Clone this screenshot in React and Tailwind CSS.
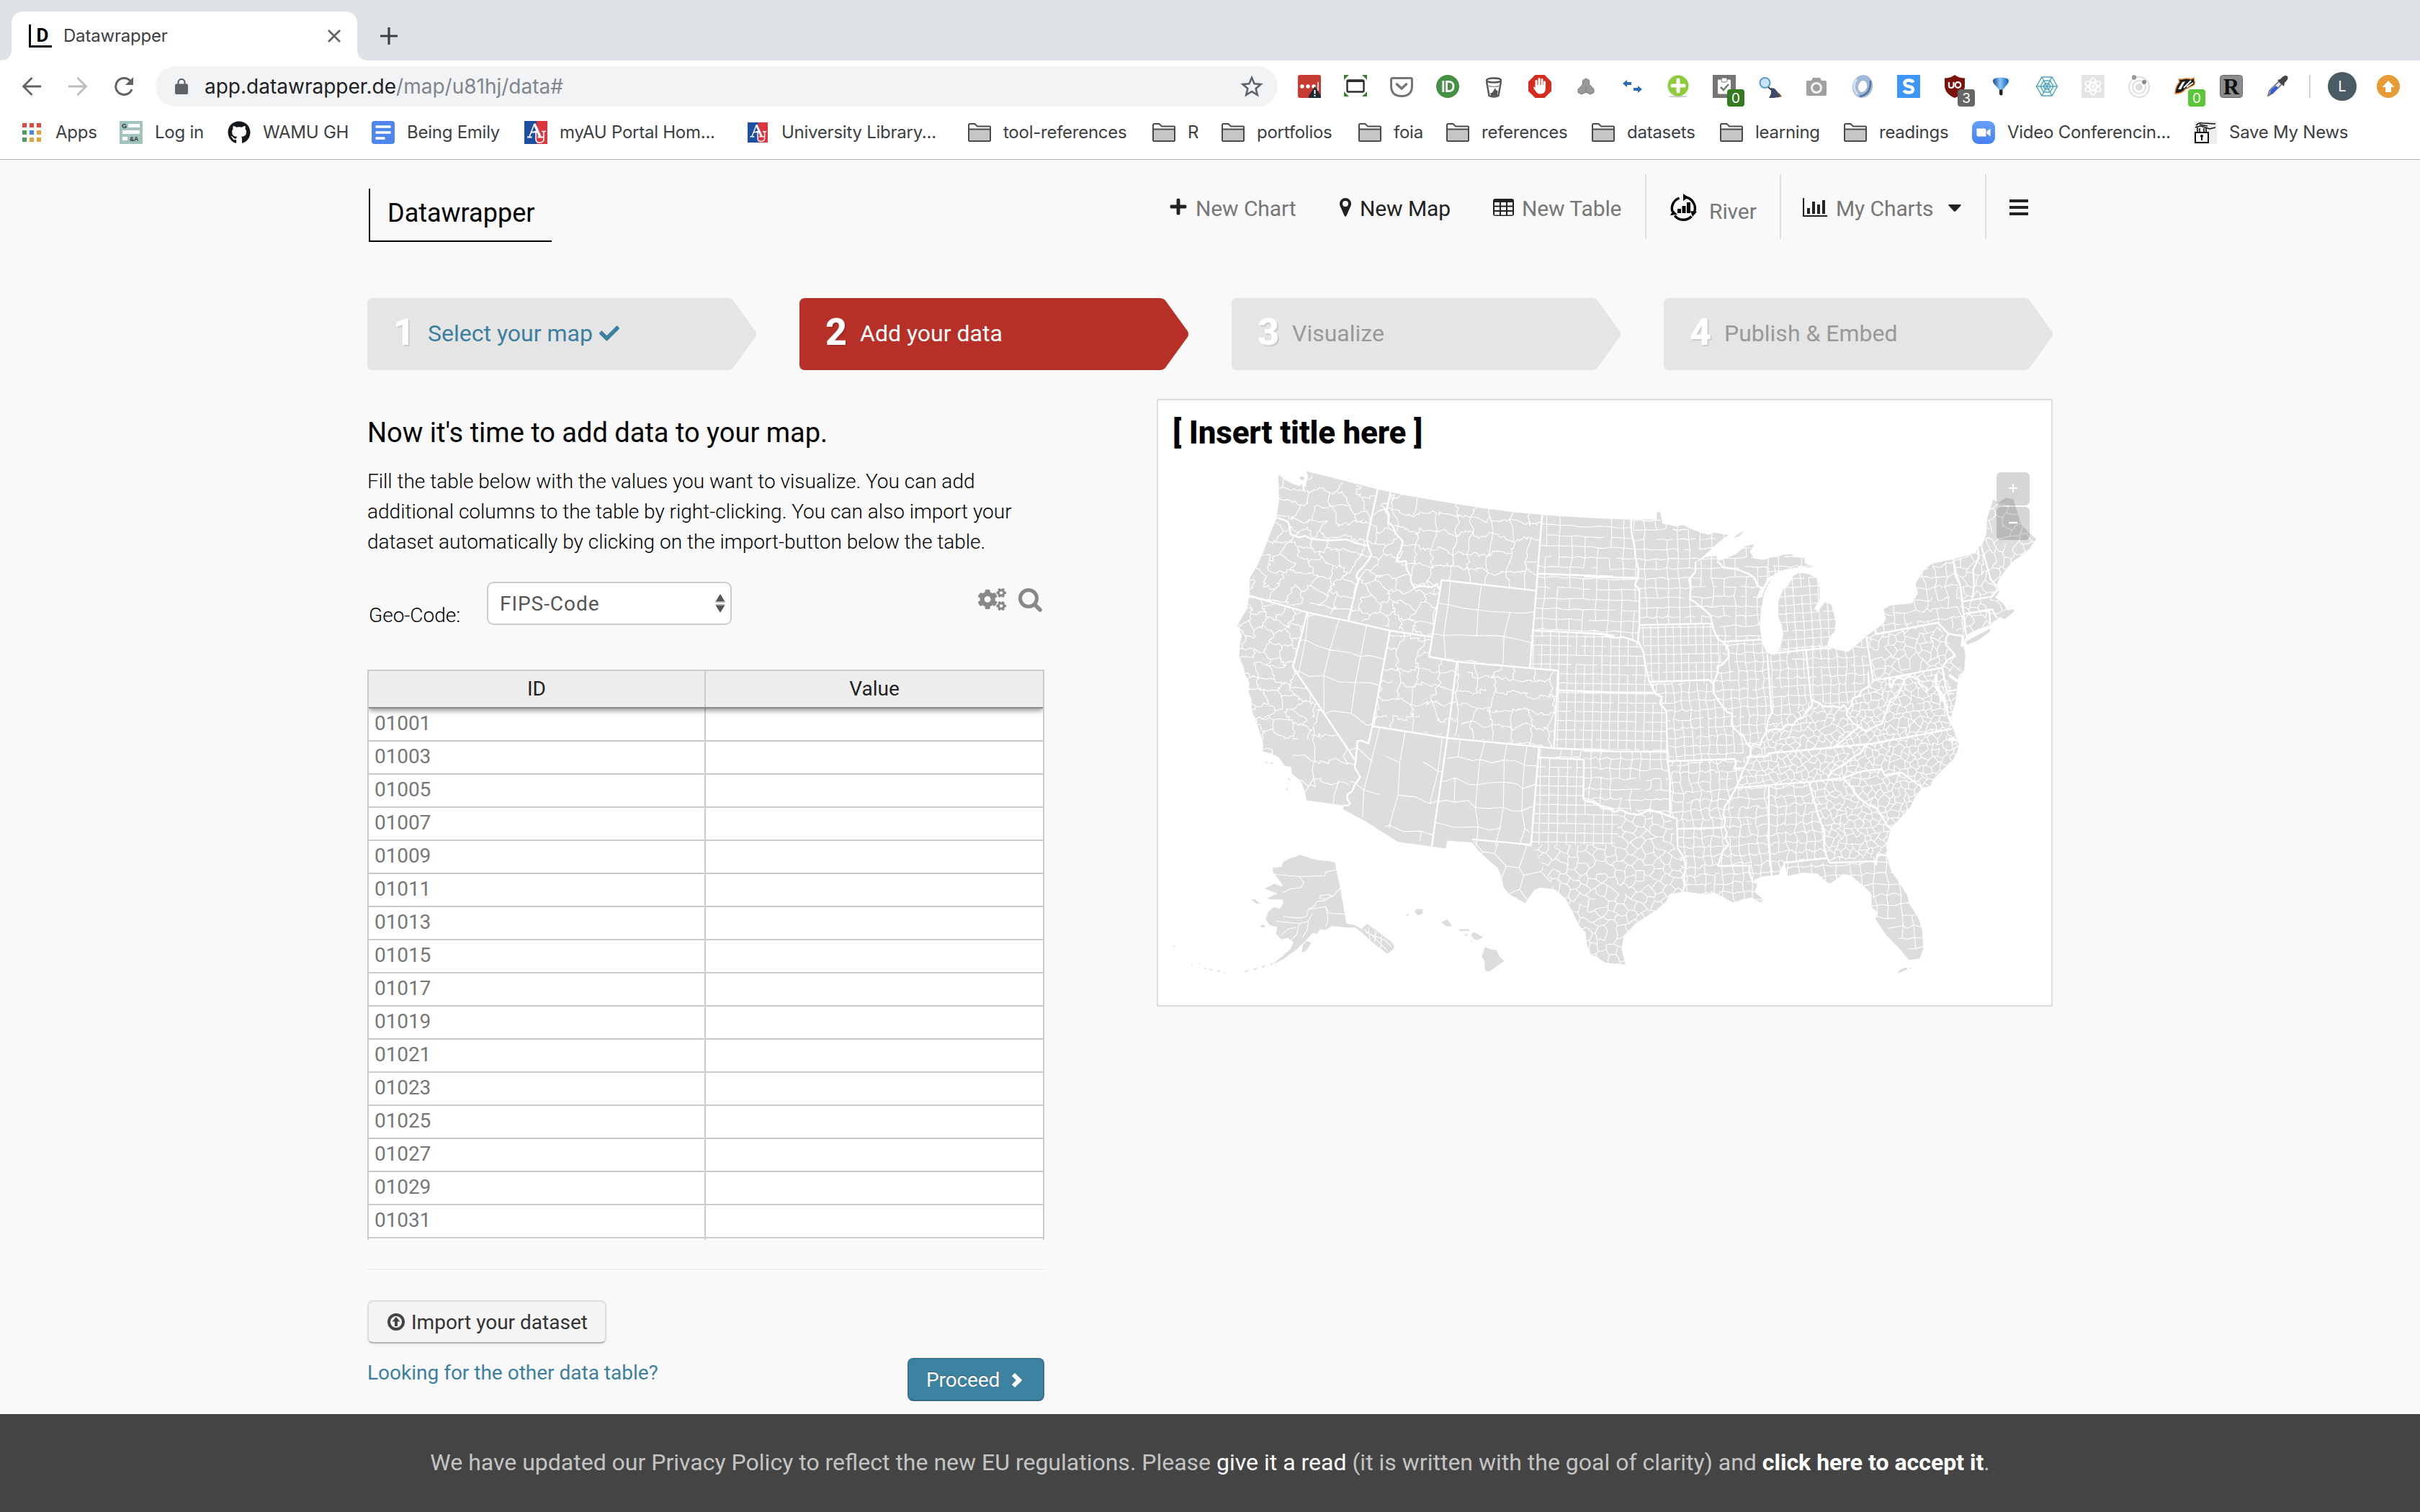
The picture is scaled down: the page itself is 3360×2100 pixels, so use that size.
import React from "react";
import { FaPlus, FaCheck, FaCogs, FaGithub } from "react-icons/fa";

/* ---------- map geometry ---------- */

const parse = (s) => s.trim().split(/\s+/).map((p) => p.split(",").map(Number));
// western and eastern map sheets use their own units
const W = (s) => parse(s).map(([x, y]) => [1600 + x * 0.40816, 550 + y * 0.54847]);
const E = (s) => parse(s).map(([x, y]) => [2200 + x * 0.42092, 550 + y * 0.54847]);
const line = (pts) => "M" + pts.map(([x, y]) => x.toFixed(1) + " " + y.toFixed(1)).join("L");
const area = (pts) => line(pts) + "Z";

const LAND = area([
  ...W("428,203 434,201 450,212 475,222 500,228 508,222 514,240 520,245 524,215 530,205 524,191 607,206 690,222 766,236 810,243 866,252 975,266 1040,274 1145,286 1240,295 1326,301 1400,305 1500,309"),
  ...E("80,311 153,313 238,313 239,294 250,294 258,323 300,330 325,327 350,336 385,347 412,352 425,346 475,352 440,372 400,400 366,422 400,408 435,405 440,418 470,410 500,400 530,380 560,375 545,395 560,412 590,415 620,408 660,402 684,400 690,408 725,410 728,425 752,430 750,434 710,432 690,436 668,438 640,445 620,455 603,460 590,485 578,492 566,515 585,508 598,482 618,460 592,500 583,540 578,580 586,625 600,650 625,656 645,640 656,605 650,580 637,555 640,520 655,490 672,480 690,455 705,448 735,450 768,462 776,490 775,515 757,540 770,545 795,520 815,530 828,570 826,595 808,610 800,635 830,642 868,648 900,628 935,605 980,580 995,565 985,540 1010,530 1080,525 1100,500 1092,475 1120,440 1145,425 1217,413 1290,398 1300,382 1310,380 1325,350 1328,310 1348,262 1365,270 1390,258 1415,262 1440,325 1465,345 1490,362 1470,385 1440,405 1410,420 1390,440 1370,460 1358,480 1368,495 1355,510 1380,525 1395,543 1415,540 1410,530 1418,545 1395,560 1385,565 1370,560 1340,580 1300,590 1260,605 1250,625 1256,660 1252,695 1232,715 1228,745 1225,770 1210,812 1200,808 1198,775 1190,790 1200,820 1215,842 1235,880 1230,900 1215,922 1190,940 1150,970 1140,988 1115,992 1090,1015 1075,1040 1040,1070 1010,1095 998,1130 997,1165 1010,1200 1040,1235 1065,1265 1070,1285 1100,1320 1113,1350 1118,1400 1105,1425 1070,1428 1040,1400 1020,1385 995,1365 960,1325 968,1308 948,1295 945,1260 920,1240 880,1215 855,1210 810,1235 790,1225 770,1210 720,1207 670,1215 662,1190 652,1190 640,1213 590,1216 560,1225 570,1240 560,1255 590,1275 580,1283 550,1270 520,1275 490,1283 460,1270 430,1258 400,1262 330,1255 280,1262 270,1280 240,1300 170,1335 130,1365 122,1400 135,1440 100,1437"),
  ...W("1568,1437 1540,1435 1510,1420 1493,1415 1478,1390 1473,1358 1455,1345 1428,1305 1410,1278 1390,1262 1370,1250 1320,1245 1300,1250 1283,1268 1268,1284 1240,1272 1215,1262 1195,1245 1186,1215 1175,1195 1150,1180 1108,1150 1088,1131 1003,1126 998,1146 950,1141 875,1133 835,1129 725,1077 648,1046 652,1037 524,1024 518,1000 505,975 475,957 472,940 450,936 430,915 405,905 374,900 378,880 360,840 338,795 338,770 328,750 330,725 315,705 312,690 295,660 298,630 304,605 290,580 305,560 322,540 330,500 332,460 360,425 380,390 400,350 422,310 430,270 430,235"),
]);

const ISLANDS = [
  E("1262,630 1258,622 1290,608 1340,588 1335,598 1300,618"),
  E("492,360 505,350 525,342 512,354"),
  E("1032,1462 1042,1452 1062,1447 1065,1452"),
  E("1070,1450 1082,1446 1078,1450"),
  E("1240,905 1251,901 1247,904"),
  W("498,208 508,203 518,207 512,214"),
  W("516,228 526,232 520,242"),
  W("382,926 392,926 390,930"), W("400,928 411,928 408,932"), W("460,965 471,972 466,974"), W("453,988 461,997 456,998"),
  W("862,1315 875,1310 868,1317"),
  W("891,1305 900,1299 920,1300 919,1311 903,1315"),
  W("983,1333 1003,1325 1020,1342 1000,1343"),
  W("1045,1350 1078,1350 1078,1354 1046,1355"),
  W("1059,1364 1070,1362 1072,1368"),
  W("1084,1364 1095,1358 1125,1370 1105,1378 1092,1374"),
  W("1080,1380 1088,1378 1086,1382"),
  W("1132,1395 1150,1401 1170,1403 1180,1418 1197,1431 1168,1446 1145,1458 1132,1455 1130,1430 1120,1420"),
  W("410,1195 440,1192 445,1180 470,1170 490,1166 498,1162 520,1166 560,1175 600,1178 621,1182 640,1250 660,1336 690,1340 712,1350 730,1337 760,1352 790,1370 810,1380 823,1392 818,1402 800,1412 778,1400 745,1382 715,1360 690,1346 660,1346 610,1342 590,1352 570,1350 560,1362 545,1360 530,1372 515,1385 505,1390 490,1402 470,1412 448,1425 430,1432 410,1438 440,1420 470,1400 480,1383 460,1372 440,1376 420,1362 425,1345 400,1340 385,1325 395,1305 412,1295 435,1298 445,1285 443,1275 400,1275 390,1272 425,1260 400,1253 382,1247 415,1235 440,1242 444,1240 428,1222 410,1205"),
  W("508,1408 512,1390 525,1380 540,1385 530,1398 516,1408"),
  W("335,1275 350,1275 365,1285 355,1286"), W("366,1342 378,1338 385,1343 375,1347"),
  W("400,1438 410,1435 404,1442"), W("370,1446 385,1440 378,1448"), W("340,1452 360,1446 350,1453"), W("310,1458 330,1451 322,1458"),
  W("176,1447 186,1451 180,1452"), W("190,1451 205,1452 200,1455"), W("215,1454 232,1455 226,1458"), W("240,1459 250,1460 246,1462"),
  W("70,1390 78,1394 75,1396"), W("132,1437 138,1442 136,1443"), W("155,1435 161,1437 158,1440"),
].map(area).join("");

const ALASKA_LINES = [
  W("415,1211 500,1217 585,1215 590,1205 625,1200"),
  W("500,1217 515,1232 505,1245 470,1248 442,1258"),
  W("640,1246 620,1262 590,1275 568,1272 572,1265 600,1262 615,1268"),
  W("445,1318 500,1322 525,1318 530,1300 550,1292 560,1280 590,1278"),
  W("530,1300 590,1293 600,1310 655,1312"),
  W("420,1330 500,1336 530,1330 545,1310"),
  W("500,1336 490,1365 470,1378"), W("530,1330 528,1350 510,1372"), W("590,1293 598,1325 590,1345"),
  W("440,1365 460,1350 490,1345"),
  W("720,1350 760,1375 800,1405"), W("735,1345 740,1380"), W("760,1355 755,1385"), W("780,1368 775,1398"), W("725,1358 790,1378 815,1395"),
].map(line).join("");

const BORDERS = [
  W("766,236 730,362 734,380 745,402 738,412 715,435 700,445 693,458 702,466 695,480 667,570"),
  W("810,243 797,290 805,300 803,320 818,330 830,350 852,368 845,390 833,405 835,420 862,418 866,440 878,455 880,470 890,485 915,481 950,484 968,476 974,488"),
  W("425,308 440,312 460,318 466,330 470,350 500,358 520,354 540,362 600,366 660,363 690,372 730,379"),
  W("328,505 527,548 667,570 808,594 950,610"),
  W("527,548 478,686 692,924 688,940 707,965 688,985 680,1000 663,1010 663,1020 672,1032 665,1037 650,1037"),
  W("808,594 748,836 735,880 712,873 697,874 696,890 692,924"),
  W("748,836 1003,866 1366,892 1568,899"),
  W("984,466 941,660 1036,673 1284,689 1380,695 1380,745 1568,750"),
  W("984,466 1306,493"),
  W("1326,301 1310,450 1306,493 1284,689"),
  W("1310,450 1568,457"),
  W("1298,594 1470,600 1530,602 1568,607"),
  W("1036,673 1003,866 950,1141"),
  W("1380,695 1366,892"),
  W("1315,892 1288,1136 1090,1123"),
  W("1312,915 1468,921 1466,1020 1480,1028 1500,1025 1520,1036 1540,1040 1568,1045"),
  E("153,313 155,345 165,380 168,410 178,440 176,460 166,478 181,490 181,580 176,620 195,650 200,680 212,720 235,755 255,762 248,778 270,797 273,920 282,970 282,1065"),
  E("0,457 178,461"),
  E("0,601 60,603 85,611 110,612 125,610 160,618 176,625"),
  E("181,580 418,576"),
  E("0,750 228,751"),
  E("0,899 270,901"),
  E("215,724 410,719 425,728"),
  E("0,1024 20,1028 40,1032 60,1045 80,1045 100,1053 120,1048 150,1058 180,1060 210,1050 240,1053 260,1058 282,1065 305,1070 307,1145 325,1165 335,1190 328,1215 330,1240 322,1258"),
  E("307,1096 455,1093"),
  E("366,422 366,445 345,465 350,485 348,515 365,522 385,535 415,555 425,590 440,615 465,628 475,645 475,662 455,680 438,685 440,700 425,728 425,750 440,770 455,785 470,800 487,805 485,835 505,850 525,862 535,880 548,890 548,910 525,945 500,992 480,1020 462,1040 458,1060 465,1075 460,1090 470,1105 465,1120 475,1135 455,1155 440,1190 545,1189 543,1205 555,1230 575,1235"),
  E("273,925 495,919 500,930 492,944 522,942"),
  E("455,622 585,617"),
  E("440,420 460,435 500,438 540,450 560,460 570,480 585,487"),
  E("603,655 615,780 618,800 605,820 600,850 585,870 580,885 560,880 548,890"),
  E("622,652 800,637"),
  E("730,642 748,770"),
  E("600,848 630,843 650,845 665,832 690,832 700,820 720,815 735,795 750,785 752,770 775,778 790,787 820,785 845,790 855,782 868,795 880,785 885,765 905,760 915,745 938,735 936,700"),
  E("930,612 952,720 1010,713 1100,700 1180,688 1195,670 1222,657 1205,640 1192,630 1192,615 1200,602 1248,608"),
  E("958,590 962,603 1165,574 1200,602"),
  E("865,795 865,808 885,828 905,838 930,850 950,840 980,830 1000,790 1010,768 1030,760 1045,740 1055,718 1030,712 1008,738 1005,715"),
  E("1055,718 1072,708 1100,718 1105,730 1130,740 1128,750"),
  E("825,890 870,860 905,838"),
  E("535,915 605,912 605,905 720,897 950,880 1210,843"),
  E("500,992 740,977 855,967 880,960 915,950 980,945 990,960 1045,953 1115,992"),
  E("805,965 815,952 840,940 870,925 895,910 910,905 930,880"),
  E("855,970 880,990 900,1015 935,1035 965,1045 985,1070 1000,1090 1010,1095"),
  E("608,990 608,1140 618,1215"),
  E("740,977 770,1060 792,1105 790,1140 800,1170 810,1182 955,1178 962,1187 965,1162 997,1163"),
  E("660,1197 658,1182 800,1170"),
  E("1217,413 1222,445 1240,480 1250,550 1258,605"),
  E("1298,385 1300,410 1282,440 1285,480 1280,510"),
  E("1250,520 1345,508 1360,492"),
  E("1252,552 1345,540 1358,560"),
  E("1310,383 1340,465 1358,480"),
  E("1335,545 1338,575"),
  E("1180,688 1195,748 1228,744"),
].map(line).join("");

const BAYS = [
  E("1160,708 1160,738 1185,760 1192,790"),
  E("1165,738 1178,768"),
  E("1205,708 1230,722"),
  E("1205,868 1232,872"),
  E("1248,608 1246,632"),
].map(line).join("");

function rng(seed) {
  let s = seed;
  return () => {
    s = (s * 1664525 + 1013904223) % 4294967296;
    return s / 4294967296;
  };
}

// irregular brick (hex = zigzag) mesh of cell lines that covers a region
function mesh(pts, cw, ch, jit, angle, hex, skip, seed) {
  const r = rng(seed);
  const xs = pts.map((p) => p[0]);
  const ys = pts.map((p) => p[1]);
  const cx = (Math.min(...xs) + Math.max(...xs)) / 2;
  const cy = (Math.min(...ys) + Math.max(...ys)) / 2;
  const half = Math.hypot(Math.max(...xs) - cx, Math.max(...ys) - cy) + ch;
  const nx = Math.ceil((half * 4) / cw);
  const ny = Math.ceil((half * 2) / ch);
  const cos = Math.cos((angle * Math.PI) / 180);
  const sin = Math.sin((angle * Math.PI) / 180);
  const V = [];
  for (let j = 0; j <= ny; j++) {
    const row = [];
    for (let i = 0; i <= nx; i++) {
      const zig = hex ? ((i + j) % 2 ? -0.14 : 0.14) * ch : 0;
      const x = -half + (i * cw) / 2 + (r() - 0.5) * cw * jit;
      const y = -half + j * ch + zig + (r() - 0.5) * ch * jit;
      row.push([cx + x * cos - y * sin, cy + x * sin + y * cos]);
    }
    V.push(row);
  }
  const wobble = jit > 0.35 ? 0.22 * cw : 0;
  const edge = (a, b) => {
    if (!wobble) return line([a, b]);
    const mid = (t) => [a[0] + (b[0] - a[0]) * t + (r() - 0.5) * wobble, a[1] + (b[1] - a[1]) * t + (r() - 0.5) * wobble];
    return cw > 20 ? line([a, mid(0.25), mid(0.5), mid(0.75), b]) : line([a, mid(0.5), b]);
  };
  let d = "";
  for (let j = 0; j < ny; j++) {
    for (let i = 0; i < nx; i++) {
      if (r() > skip * 0.6) d += edge(V[j][i], V[j][i + 1]);
      const down = hex ? (i + j) % 2 === 0 : i % 2 === 0;
      if (down && r() > skip) d += edge(V[j][i], V[j + 1][i]);
    }
  }
  return d;
}

const REGIONS = [
  [W("400,180 810,243 797,290 850,368 862,420 890,485 974,488 950,610 320,505 300,450 420,250"), 25, 20, 0.6, 8, true, 0.14],
  [W("810,240 1326,298 1306,493 984,466 974,488 890,485 862,420 850,368 797,290"), 27, 24, 0.5, 5, false, 0.14],
  [W("984,466 1306,493 1284,689 941,660"), 42, 38, 0.2, 5, false, 0.15],
  [W("320,505 527,548 478,686 560,775 540,870 360,870 250,700 250,560"), 23, 17, 0.6, 15, true, 0.12],
  [W("560,775 692,924 650,1040 500,1030 360,920 360,870 540,870"), 46, 34, 0.36, 8, false, 0.1],
  [W("527,548 808,594 748,836 1003,866 950,1141 648,1046 692,924 478,686"), 42, 46, 0.34, 9, false, 0.15],
  [W("808,594 950,610 941,660 1380,695 1366,892 748,836"), 27, 22, 0.45, 5, false, 0.17],
  [W("1003,866 1315,892 1288,1136 950,1141"), 32, 31, 0.3, 5, false, 0.2],
  [[...W("1326,298 1500,305"), ...E("153,310 178,440 181,580 176,625 110,612"), ...W("1530,602 1298,594")], 18, 14.5, 0.16, 2, false, 0.18],
  [[...W("1284,594 1530,602"), ...E("110,612 176,625 255,765 270,797 273,899"), ...W("1366,892 1380,695 1284,689")], 12, 13, 0.06, 1, false, 0.07],
  [[...W("1315,892 1568,899"), ...E("273,899 282,1065 80,1045"), ...W("1466,1020 1468,921 1312,915")], 14, 14, 0.3, 1, false, 0.2],
  [[...W("1312,915 1468,921 1466,1020 1568,1045"), ...E("110,1053 110,1120"), ...W("1568,1136 1288,1136")], 12.6, 13, 0.04, 1, false, 0.04],
  [[...W("1290,1136 1568,1136"), ...E("110,1120 110,1053 282,1065 307,1145 335,1190 322,1262 125,1460"), ...W("1568,1450 1480,1430 1380,1265")], 15, 13.5, 0.5, 28, true, 0.06],
  [W("1090,1123 1290,1136 1380,1265 1270,1300 1160,1220"), 36, 34, 0.35, 25, true, 0.1],
  [E("153,290 780,340 780,435 620,455 585,617 455,622 418,576 181,580 178,440"), 15.5, 13.5, 0.22, -1, false, 0.18],
  [E("181,580 418,576 470,640 425,728 215,724"), 10.4, 12.4, 0.05, -1, false, 0.03],
  [E("600,430 850,440 850,640 600,660"), 11.5, 12, 0.08, -4, false, 0.05],
  [E("455,622 600,617 600,650 935,605 940,700 890,770 850,788 752,770 600,850 548,890 500,919 273,925 270,797 215,724 425,728"), 11.5, 12.5, 0.28, -3, false, 0.12],
  [E("273,925 535,915 500,992 740,977 792,1105 800,1172 660,1182 660,1300 322,1270 305,1070 282,1065"), 13, 13, 0.42, -3, false, 0.08],
  [E("548,890 600,850 752,770 865,795 950,718 1180,688 1260,820 1250,900 997,1165 805,1180 740,977 500,992"), 11, 9.6, 0.72, -6, true, 0.03],
  [E("660,1182 810,1182 997,1163 1150,1300 1130,1450 940,1300 900,1250 660,1240"), 17, 15.5, 0.34, -4, false, 0.12],
  [E("930,605 960,600 1165,574 1222,657 1260,720 1180,688 950,718"), 13.5, 12, 0.65, -20, true, 0.05],
  [E("960,603 960,500 1090,420 1217,405 1258,605 1165,574"), 15, 15, 0.38, -6, false, 0.15],
  [E("1217,405 1300,370 1348,240 1500,340 1500,600 1258,625"), 15, 14, 0.6, -12, true, 0.12],
];

function UsMap() {
  return (
    <svg viewBox="1608 650 1240 746" className="block h-[746px] w-[1240px]">
      <defs>
        <clipPath id="land"><path d={LAND} /></clipPath>
        {REGIONS.map((g, i) => (
          <clipPath id={"region" + i} key={i}><path d={area(g[0])} /></clipPath>
        ))}
      </defs>
      <path d={LAND} fill="#dddddd" />
      <g clipPath="url(#land)" fill="none" stroke="#fff">
        {REGIONS.map(([pts, cw, ch, jit, angle, hex, skip], i) => (
          <g key={i} clipPath={`url(#region${i})`}>
            <path d={mesh(pts, cw, ch, jit, angle, hex, skip, 77 + i * 31)} strokeWidth="1.15" />
          </g>
        ))}
        <path d={BORDERS} strokeWidth="2.4" strokeLinejoin="round" strokeLinecap="round" />
        <path d={BAYS} strokeWidth="4" strokeLinecap="round" />
      </g>
      <path d={ISLANDS} fill="#dddddd" />
      <path d={ALASKA_LINES} fill="none" stroke="#fff" strokeWidth="1.1" />
    </svg>
  );
}

/* ---------- browser icons ---------- */

const I = ({ children, vb = "0 0 32 32", className = "h-8 w-8" }) => (
  <svg viewBox={vb} className={className + " block shrink-0"} fill="none">{children}</svg>
);

const Folder = () => (
  <I>
    <path d="M1 27V5.500Q1 4 2.500 4H9.500L13 7.500H30Q31 7.500 31 8.500V27Q31 28 30 28H2Q1 28 1 27Z" fill="#fff" stroke="#4a4a4a" strokeWidth="2" />
    <path d="M2 11.500H30V27H2Z" fill="#c6c6c6" />
    <path d="M1 11.500H31" stroke="#4a4a4a" strokeWidth="2" />
  </I>
);

const AU = ({ className }) => (
  <I className={className}>
    <rect width="17" height="32" fill="#1f4fa0" />
    <rect x="17" width="15" height="32" fill="#dc3640" />
    <path d="M7 22L14 4" stroke="#fff" strokeWidth="1.600" />
    <path d="M14 4L22 22" stroke="#fff" strokeWidth="3.400" />
    <path d="M9.500 15.500H19M4 22.500H10.500M18.500 22.500H26" stroke="#fff" strokeWidth="1.800" />
    <path d="M16 15V25Q16 30 21 30Q27 30 27 25V15M13.500 14.500H18.500M24 14.500H30" stroke="#fff" strokeWidth="1.600" />
  </I>
);

const Apps = () => (
  <I>
    {["#e0483d", "#e0483d", "#e0483d", "#4b9e5a", "#4285f4", "#e2a33b", "#4b9e5a", "#e2a33b", "#e2a33b"].map((c, i) => (
      <rect key={i} x={3 + (i % 3) * 10} y={3 + Math.floor(i / 3) * 10} width="6" height="6" fill={c} />
    ))}
  </I>
);

const LogIn = () => (
  <I>
    <rect width="32" height="32" fill="#a2c4bf" />
    <rect x="12" y="4" width="16" height="5" fill="#fff" />
    <rect x="4" y="13" width="24" height="5" fill="#fff" />
    <rect x="4" y="22" width="7" height="5" fill="#fff" />
    <text x="3" y="10" fontSize="9" fontWeight="700" fill="#333" fontFamily="Liberation Sans, sans-serif">G</text>
    <text x="14" y="28" fontSize="8.500" fontWeight="700" fill="#333" fontFamily="Liberation Sans, sans-serif">&amp;A</text>
  </I>
);

const Docs = () => (
  <I>
    <rect width="32" height="32" rx="4" fill="#4f86ec" />
    <path d="M5.500 8H26.500M5.500 16H26.500M5.500 24H18.500" stroke="#fff" strokeWidth="3.600" />
  </I>
);

const Zoom = () => (
  <I>
    <defs><linearGradient id="zg" x2="0" y2="1"><stop stopColor="#66a0fa" /><stop offset="1" stopColor="#4780ee" /></linearGradient></defs>
    <rect width="32" height="32" rx="9" fill="url(#zg)" />
    <path d="M6.500 10.500H17Q19.500 10.500 19.500 13V21.500H9Q6.500 21.500 6.500 19ZM20.500 14.500L25.500 10.500V21.500L20.500 17.500Z" fill="#fff" />
  </I>
);

const SaveNews = () => (
  <I>
    <rect width="32" height="32" fill="#eeeeee" />
    <rect x="2" y="16" width="18" height="14" fill="#fff" stroke="#111" strokeWidth="2" />
    <path d="M5 16V9M8 16V10M14 16V10M17 16V10" stroke="#111" strokeWidth="1.600" />
    <path d="M3 6Q7 2 12 3L30 4M2 9Q8 6 13 8L22 11L30 9M8 5L19 7" stroke="#111" strokeWidth="1.600" />
    <circle cx="11" cy="21" r="2" fill="#111" /><path d="M11 21V27" stroke="#111" strokeWidth="2" />
  </I>
);

const BOOKMARKS = [
  ["Apps", <Apps />, "w-[138px]"],
  ["Log in", <LogIn />, "w-[150px]"],
  ["WAMU GH", <FaGithub className="h-8 w-8 shrink-0 text-[#15181c]" />, "w-[200px]"],
  ["Being Emily", <Docs />, "w-[212px]"],
  ["myAU Portal Hom...", <AU />, "w-[308px]"],
  ["University Library...", <div className="flex w-8 justify-center"><AU className="h-7 w-7" /></div>, "w-[308px]"],
  ["tool-references", <Folder />, "w-[256px]"],
  ["R", <Folder />, "w-[96px]"],
  ["portfolios", <Folder />, "w-[190px]"],
  ["foia", <Folder />, "w-[122px]"],
  ["references", <Folder />, "w-[202px]"],
  ["datasets", <Folder />, "w-[178px]"],
  ["learning", <Folder />, "w-[172px]"],
  ["readings", <Folder />, "w-[178px]"],
  ["Video Conferencin...", <Zoom />, "w-[308px]"],
  ["Save My News", <SaveNews />, "w-[230px]"],
];

const Badge = ({ className, children }) => (
  <span className={"absolute left-[20px] top-[20px] flex h-6 w-6 items-center justify-center rounded-[4px] text-[19px] leading-none text-white " + className}>{children}</span>
);

const EXTENSIONS = [
  <I><rect width="32" height="32" rx="3" fill="#c63c32" /><circle cx="6" cy="16" r="2.700" fill="#fff" /><circle cx="14" cy="16" r="2.700" fill="#fff" /><circle cx="22" cy="16" r="2.700" fill="#fff" /><path d="M28 10V22" stroke="#fff" strokeWidth="1.500" /><path d="M23.500 16L32 29V32H15V29Z" fill="#1f2a35" /><path d="M23.500 21V26.500M23.500 28V30" stroke="#fff" strokeWidth="2" /></I>,
  <I><path d="M0 0H7L0 7ZM32 0V7L25 0ZM0 30V23L7 30ZM32 30H25L32 23Z" fill="#3f7d35" /><rect x="4.500" y="7.500" width="23" height="16" rx="1.500" fill="#fff" stroke="#2d2d30" strokeWidth="2.400" /><path d="M4 7H28V10H4Z" fill="#2d2d30" /></I>,
  <I><path d="M3.500 4.500H28.500Q30.500 4.500 30.500 6.500V15Q30.500 29.500 16 29.500Q1.500 29.500 1.500 15V6.500Q1.500 4.500 3.500 4.500Z" stroke="#757575" strokeWidth="3" /><path d="M9.500 13L16 19L22.500 13" stroke="#757575" strokeWidth="3.600" strokeLinecap="round" strokeLinejoin="round" /></I>,
  <I><circle cx="16" cy="16" r="16" fill="#449044" /><path d="M9.800 8V24" stroke="#fff" strokeWidth="2.800" /><path d="M14.600 9.300H17Q24 9.300 24 16Q24 22.700 17 22.700H14.600Z" stroke="#fff" strokeWidth="2.800" /></I>,
  <I><ellipse cx="16" cy="7.500" rx="10" ry="3" stroke="#555" strokeWidth="2.400" /><path d="M6 9L9.500 29Q16 32 22.500 29L26 9" stroke="#555" strokeWidth="2.400" /><path d="M7.500 15Q16 18 24.500 15" stroke="#999" strokeWidth="1.500" /><path d="M11 25Q13 26 15 23L18 18L19 21L21.500 22L21 29H12Z" fill="#555" /></I>,
  <I><path d="M9.500 0H22.500L32 9.500V22.500L22.500 32H9.500L0 22.500V9.500Z" fill="#d32d20" /><path d="M11 17V8.500M15 16V5.500M19 16V6.500M22.500 18V10" stroke="#fff" strokeWidth="2.900" strokeLinecap="round" /><path d="M9.600 14H23.900V20Q23 26.500 16.500 26.500Q12 26.500 9 21L6.800 17.500Q8 16 10 18Z" fill="#fff" /></I>,
  <I><path d="M16 5L20.500 7.500V13L25 17.500L27 20V24.500L22 27L17 24.500H15L10 27L5 24.500V20L7.500 17.500L11.500 13V7.500Z" fill="#999" stroke="#777" strokeWidth="1" /><path d="M16 17V24" stroke="#777" strokeWidth="1" /></I>,
  <I><path d="M3 12L9 7V10H15V14H9V17ZM30 20L24 15V18H18V22H24V25Z" fill="#2a6fb5" /></I>,
  <I><ellipse cx="16" cy="30" rx="13" ry="1.500" fill="#ccc" /><circle cx="16" cy="15" r="14.500" fill="#8ccb3a" /><path d="M16 7V23M8 15H24" stroke="#fff" strokeWidth="5" strokeLinecap="round" /></I>,
  <><I><rect width="32" height="32" fill="#757575" /><rect x="7" y="6.500" width="18" height="20" rx="1.500" fill="#fff" /><rect x="12" y="4" width="8" height="6" rx="2" fill="#fff" stroke="#757575" /><path d="M11 17L15 21L22 13" stroke="#757575" strokeWidth="2.500" /></I><Badge className="bg-[#357a1f]">0</Badge></>,
  <I><circle cx="8.500" cy="11" r="7" fill="#c5e4fa" stroke="#5b9bc9" strokeWidth="2" /><path d="M13 17L20 23" stroke="#333" strokeWidth="2" /><path d="M17 18L22 19L27 25L30 28L28 31L20 32H14L17 26Z" fill="#3c4a68" /><path d="M28 25L32 30L28 31Z" fill="#8a4a2a" /></I>,
  <I><path d="M3 8H9L11 4H21L23 8H28Q30 8 30 10V27Q30 29 28 29H4Q2 29 2 27V10Q2 8 3 8Z" fill="#a0a0a0" /><circle cx="16" cy="18" r="6.500" fill="#a0a0a0" stroke="#f2f2f2" strokeWidth="3" /></I>,
  <I><ellipse cx="16" cy="16" rx="10" ry="12" stroke="#9fb8d8" strokeWidth="8" transform="rotate(15 16 16)" /><path d="M8 6Q0 16 9 27" stroke="#d5e1f0" strokeWidth="3" /><path d="M12 30Q28 27 27 8" stroke="#54769f" strokeWidth="2.500" /></I>,
  <I><rect width="32" height="32" fill="#3e97f5" /><path d="M22.500 10.500Q21 7.500 16 7.500Q10.500 7.500 10.500 11.500Q10.500 15 16 16Q22 17 22 20.500Q22 24.500 16 24.500Q11 24.500 9.500 21.500" stroke="#fff" strokeWidth="4.400" /></I>,
  <><I><path d="M16 0Q22 4.500 30 4.500V15Q30 26 16 32Q2 26 2 15V4.500Q10 4.500 16 0Z" fill="#7b120d" /><path d="M8 10V15Q8 18 11 18Q14.500 18 14.500 15V10" stroke="#fff" strokeWidth="2.200" /><circle cx="20.500" cy="14" r="3.800" stroke="#fff" strokeWidth="2.200" /></I><Badge className="bg-[#666]">3</Badge></>,
  <I><defs><linearGradient id="vg" x2="1"><stop stopColor="#12428f" /><stop offset=".45" stopColor="#8cc8f4" /><stop offset="1" stopColor="#0b5cc0" /></linearGradient></defs><path d="M7 5Q16 2 25 5Q29 8 25 13L18.500 21H14L7 13Q3 8 7 5Z" fill="url(#vg)" /><path d="M14 20.500H18.500V27Q16.500 30 14 27Z" fill="#222" /></I>,
  <I><path d="M9 3H23L30.500 16L23 29H9L1.500 16ZM11.500 8H20.500L25 16L20.500 24H11.500L7 16ZM13.500 12H18.500L21 16L18.500 20H13.500L11 16ZM9 3L23 29M23 3L9 29M1.500 16H30.500" stroke="#4fa9b8" strokeWidth="1.500" /></I>,
  <I><rect width="32" height="32" rx="2" fill="#e4e4e4" /><g stroke="#fff" strokeWidth="1.700"><ellipse cx="16" cy="16" rx="12" ry="4.700" transform="rotate(90 16 16)" /><ellipse cx="16" cy="16" rx="12" ry="4.700" transform="rotate(30 16 16)" /><ellipse cx="16" cy="16" rx="12" ry="4.700" transform="rotate(150 16 16)" /></g><circle cx="16" cy="16" r="2.400" fill="#fff" /></I>,
  <I><circle cx="16" cy="17" r="14" stroke="#ddd" strokeWidth="2" /><circle cx="16" cy="17" r="9" stroke="#ddd" strokeWidth="2" /><circle cx="16" cy="17" r="5" fill="#ddd" /><circle cx="9" cy="3.500" r="3.200" fill="#999" /><circle cx="23" cy="10" r="3" fill="#888" /></I>,
  <><I><path d="M2 24Q3 15 8 10L7 6L12 6Q18 4 24 6L28 4L29 9Q31 14 24 16L16 20Q12 26 2 26Z" fill="#1d1d1d" stroke="#e88f3a" strokeWidth="1.500" /><path d="M6 20L12 10L16 9L10 20Z" fill="#fff" /><path d="M14 18L20 12L24 8M18 17L27 11" stroke="#fff" strokeWidth="1.800" /></I><Badge className="bg-[#5cc639]">0</Badge></>,
  <I><rect x="0.500" y="0.500" width="31" height="31" rx="4" fill="#8c8c8c" stroke="#666" /><text x="16" y="26.500" textAnchor="middle" fontSize="31" fontWeight="700" fill="#111" fontFamily="Liberation Serif, serif">R</text></I>,
  <I><path d="M3 29L5 22L18 9L22 13L9 26Z" fill="#dfe6f5" stroke="#666" strokeWidth="1.500" /><path d="M5 27L7 21L14 15L17 18L9 26Z" fill="#2f5be0" /><path d="M16 7L20 6Q26 -1 30 2Q32 6 26 11L25 16Z" fill="#444" /></I>,
];

/* ---------- page pieces ---------- */

const STEP_SHAPE = "[clip-path:path('M8_0H500Q507_0_510_6L539_46Q541_50_539_54L510_94Q507_100_500_100H8Q0_100_0_92V8Q0_0_8_0Z')]";

function Step({ n, active, children, className }) {
  return (
    <div className={"flex h-[100px] w-[541px] items-center pl-[36px] text-[32px] " + STEP_SHAPE + " " + className}>
      <span className={"w-[48px] text-[52px] font-extrabold leading-none text-white -mt-1 " + (active ? "[text-shadow:2px_2px_0_#9c2922]" : "[text-shadow:2px_2px_0_#cccccc]")}>{n}</span>
      <span className="flex items-center whitespace-nowrap pb-[2px]">{children}</span>
    </div>
  );
}

const IDS = ["01001", "01003", "01005", "01007", "01009", "01011", "01013", "01015", "01017", "01019", "01021", "01023", "01025", "01027", "01029", "01031"];

function Browser() {
  return (
    <div className="bg-white font-['Inter',sans-serif] text-[#3c4043]">
      <div className="flex h-[84px] items-end bg-[#dee1e6]">
        <svg className="h-4 w-4" viewBox="0 0 16 16"><path d="M16 0V16H0Q16 16 16 0Z" fill="#fff" /></svg>
        <div className="flex h-[68px] w-[480px] items-center rounded-t-2xl bg-white pl-6 pr-[22px]">
          <div className="flex h-8 w-8 items-center justify-center border-b-[3px] border-l-[3px] border-black pl-[3px] font-['Roboto'] text-[26px] font-bold leading-none text-black">D</div>
          <span className="ml-4 flex-1 text-[24px] tracking-[-0.2px]">Datawrapper</span>
          <svg className="h-5 w-5" viewBox="0 0 20 20"><path d="M2 2L18 18M18 2L2 18" stroke="#5f6368" strokeWidth="2.600" /></svg>
        </div>
        <svg className="h-4 w-4" viewBox="0 0 16 16"><path d="M0 0V16H16Q0 16 0 0Z" fill="#fff" /></svg>
        <svg className="mb-[22px] ml-4 h-6 w-6" viewBox="0 0 24 24"><path d="M12 1V23M1 12H23" stroke="#3c4043" strokeWidth="3.200" strokeLinecap="round" /></svg>
      </div>
      <div className="flex h-[72px] items-center">
        <svg className="ml-[30px] h-7 w-7" viewBox="0 0 28 28" fill="none"><path d="M27 14H3M14.500 2L2.500 14L14.500 26" stroke="#5f6368" strokeWidth="2.800" /></svg>
        <svg className="ml-9 h-7 w-7" viewBox="0 0 28 28" fill="none"><path d="M1 14H25M13.500 2L25.500 14L13.500 26" stroke="#babcbe" strokeWidth="2.800" /></svg>
        <svg className="ml-9 h-7 w-7" viewBox="0 0 28 28" fill="none"><path d="M25 18A11.500 11.500 0 1 1 23 6.500" stroke="#5f6368" strokeWidth="3" /><path d="M27 1V12H16Z" fill="#5f6368" /></svg>
        <div className="ml-[30px] flex h-14 w-[1558px] items-center rounded-full bg-[#f1f3f4] pl-[27px] pr-5">
          <svg className="h-[22px] w-[18px]" viewBox="0 0 18 22" fill="none"><rect y="7.500" width="18" height="14.500" rx="2" fill="#5f6368" /><path d="M4.500 9V5.500A4.500 4.500 0 0 1 13.500 5.500V9" stroke="#5f6368" strokeWidth="2.200" /></svg>
          <span className="ml-[23px] flex-1 whitespace-nowrap text-[28px] text-[#80868b]"><span className="text-[#202124]">app.datawrapper.de</span>/map/u81hj/data#</span>
          <svg className="h-8 w-8" viewBox="0 0 32 32" fill="none"><path d="M16 4L19.600 12.300L28.500 13.100L21.700 19L23.800 27.800L16 23.100L8.200 27.800L10.300 19L3.500 13.100L12.400 12.300Z" stroke="#5f6368" strokeWidth="2.600" /></svg>
        </div>
        <div className="ml-7 flex gap-8">
          {EXTENSIONS.map((e, i) => <div key={i} className="relative h-8 w-8 shrink-0">{e}</div>)}
        </div>
        <div className="ml-[28px] h-8 w-[2px] bg-[#cfd1d4]" />
        <div className="ml-[24px] flex h-10 w-10 items-center justify-center rounded-full bg-[#4a5b63] text-[20px] text-white">L</div>
        <I className="ml-7 h-8 w-8"><circle cx="16" cy="16" r="16" fill="#e69b33" /><path d="M16 8L24.500 17H20V24H12V17H7.500Z" fill="#fff" /></I>
      </div>
      <div className="flex h-[66px] border-b border-[#b4b7ba] pl-7">
        {BOOKMARKS.map(([name, icon, w]) => (
          <div key={name} className={"flex h-14 shrink-0 items-center gap-[17px] whitespace-nowrap text-[24px] tracking-[-0.25px] " + w}>
            {icon}
            <span>{name}</span>
          </div>
        ))}
      </div>
    </div>
  );
}

function Header() {
  const item = "flex h-[90px] items-center pt-[4px] shrink-0 whitespace-nowrap ";
  return (
    <div className="flex h-[192px] pl-[512px]">
      <div className="mt-10 flex h-[74px] w-[254px] items-center border-b-2 border-l-2 border-black pb-[5px] pl-[24px] text-[36px] text-black">Datawrapper</div>
      <div className="ml-[858px] mt-5 flex text-[30px] tracking-[-0.1px] text-[#777]">
        <div className={item + "w-[236px]"}><FaPlus className="mb-1 mr-3 h-[26px] w-[24px] text-[#222]" />New Chart</div>
        <div className={item + "w-[213px] text-[#222]"}>
          <svg className="mb-0.5 mr-3 h-[26px] w-4" viewBox="0 0 16 26"><path fillRule="evenodd" d="M8 0A8 8 0 0 1 16 8Q16 10.500 14.500 13L9.500 24.500Q8 27 6.500 24.500L1.500 13Q0 10.500 0 8A8 8 0 0 1 8 0ZM8 4A4 4 0 1 0 8 12A4 4 0 1 0 8 4Z" fill="#222" /></svg>New Map
        </div>
        <div className={item + "w-[211px]"}>
          <svg className="mb-0.5 mr-[11px] h-6 w-[29px]" viewBox="0 0 29 24"><rect width="29" height="24" rx="3" fill="#222" /><g fill="#f9f9f9">{[2, 11, 20].map((x) => [5, 11.5, 18].map((y) => <rect key={x + "-" + y} x={x} y={y} width="7" height="4.500" />))}</g></svg>New Table
        </div>
        <div className={item + "w-[187px] border-l-2 border-[#ddd] pl-[32px]"}>
          <svg className="mr-[17px] h-10 w-[38px]" viewBox="0 0 38 40" fill="none"><g stroke="#000" strokeWidth="3.400"><path d="M20 4.800A15.500 15.500 0 0 1 33.800 27" /><path d="M30.500 31.500A15.500 15.500 0 0 1 7.200 30.500" /><path d="M4 25A15.500 15.500 0 0 1 13.500 6" /></g><path d="M19 0V10L26 5ZM38 25L29 24L32 32ZM1 30L5 23L11 29Z" fill="#000" /><path d="M11 27V21H16V27ZM17.500 27V17H22.500V27ZM24 27V12H29V27Z" fill="#000" /></svg><span className="mt-2">River</span>
        </div>
        <div className={item + "w-[285px] border-l-2 border-[#ddd] pl-[30px]"}>
          <svg className="mb-0.5 mr-3 h-[26px] w-[34px]" viewBox="0 0 34 26" fill="none"><path d="M1 0V25H34" stroke="#222" strokeWidth="2.200" /><path d="M8 22V14M15 22V5M22 22V9M29 22V3" stroke="#222" strokeWidth="4" /></svg>My Charts
          <svg className="ml-5 h-[10px] w-[18px]" viewBox="0 0 18 10"><path d="M1 0H17Q18 .5 17.500 1.500L10 9.500Q9 10.300 8 9.500L.5 1.500Q0 .5 1 0Z" fill="#222" /></svg>
        </div>
        <div className={item + "border-l-2 border-[#ddd] pl-[32px]"}>
          <svg className="mb-0.5 h-[22px] w-[26px]" viewBox="0 0 26 22"><path d="M0 2H26M0 11H26M0 20H26" stroke="#222" strokeWidth="4" /></svg>
        </div>
      </div>
    </div>
  );
}

export default function App() {
  return (
    <div className="flex h-[2100px] w-[3360px] flex-col overflow-hidden bg-[#f9f9f9] font-['Roboto',sans-serif] text-black">
      <Browser />
      <Header />
      <div className="flex gap-[59px] pl-[510px]">
        <Step n="1" className="bg-[#e5e5e5] text-[#3c80a0]">Select your map<FaCheck className="ml-[9px] h-7 w-7" /></Step>
        <Step n="2" active className="bg-[#b63028] text-white">Add your data</Step>
        <Step n="3" className="bg-[#e5e5e5] text-[#999]">Visualize</Step>
        <Step n="4" className="bg-[#e5e5e5] text-[#999]">Publish &amp; Embed</Step>
      </div>
      <div className="mt-10 flex h-[1410px] items-start pl-[510px]">
        <div className="w-[940px] pt-[21px]">
          <h1 className="text-[38px] leading-[52px]">Now it's time to add data to your map.</h1>
          <p className="mt-[21px] whitespace-nowrap text-[28px] font-light leading-[42px]">
            Fill the table below with the values you want to visualize. You can add<br />
            additional columns to the table by right-clicking. You can also import your<br />
            dataset automatically by clicking on the import-button below the table.
          </p>
          <div className="mt-[34px] flex h-[60px] items-start">
            <span className="mt-[27px] w-[166px] pl-[2px] text-[28px] font-light leading-10">Geo-Code:</span>
            <div className="flex h-[60px] w-[340px] items-center rounded-[9px] border-2 border-[#ccc] bg-white pl-4 pr-[7px] text-[28px] tracking-[0.95px] text-[#555]">
              <span className="flex-1 pt-[2px]">FIPS-Code</span>
              <svg className="h-[26px] w-[14px]" viewBox="0 0 14 26"><path d="M7 0L13.500 10.500H.5ZM7 26L13.500 15.500H.5Z" fill="#555" /><path d="M.5 11.500H13.500M.5 14.500H13.500" stroke="#bbb" /></svg>
            </div>
            <FaCogs className="ml-[342px] mt-[5px] h-[39px] w-[39px] text-[#888]" />
            <svg className="ml-[16px] mt-[8px] h-9 w-9" viewBox="0 0 36 36" fill="none"><circle cx="15" cy="15" r="11.500" stroke="#888" strokeWidth="5" /><path d="M24 24L31 31" stroke="#888" strokeWidth="5.500" strokeLinecap="round" /></svg>
          </div>
          <div className="mt-[62px] h-[792px] overflow-hidden border-x-2 border-t-2 border-[#ccc] bg-white">
            <div className="relative flex h-[52px] border-b-2 border-[#8a8a8a] bg-[#eee] text-[28px] text-[#222] shadow-[0_2px_8px_rgba(0,0,0,0.5)]">
              <div className="flex w-[468px] items-center justify-center border-r-2 border-[#ccc] pb-px">ID</div>
              <div className="flex w-[468px] items-center justify-center pb-px">Value</div>
            </div>
            {IDS.concat("").map((id) => (
              <div key={id} className="flex h-[46px] border-b-2 border-[#ccc] text-[28px] tracking-[-0.1px] text-[#777]">
                <div className="flex w-[468px] items-center border-r-2 border-[#ccc] pb-[2px] pl-[8px]">{id}</div>
              </div>
            ))}
          </div>
          <div className="mt-10 h-1 border-b-2 border-t-2 border-b-white border-t-[#eee]" />
          <button className="mt-10 flex h-[60px] w-[332px] items-center gap-[9px] rounded-lg border-2 border-[#ddd] border-b-[#b3b3b3] bg-[#f5f5f5] pl-[26px] text-[28px] text-[#333] shadow-[0_2px_4px_rgba(0,0,0,0.06)]">
            <svg className="h-6 w-6" viewBox="0 0 24 24" fill="none"><circle cx="12" cy="12" r="10" stroke="#444" strokeWidth="4" /><path d="M12 5L17.500 11.500H14V18H10V11.500H6.500Z" fill="#444" /></svg>
            <span className="whitespace-nowrap pt-[2px]">Import your dataset</span>
          </button>
          <div className="mt-5 flex items-start justify-between">
            <a className="pt-px text-[28px] leading-10 text-[#3c80a0]">Looking for the other data table?</a>
            <button className="flex h-[60px] w-[190px] items-center rounded-lg border-2 border-[#37738f] border-b-[#2f6680] bg-[#3e82a2] pl-[24px] pt-[2px] text-[28px] tracking-[-0.1px] text-white [text-shadow:0_-1px_1px_rgba(0,0,0,0.3)]">
              Proceed
              <svg className="ml-[15px] h-[22px] w-[17px]" viewBox="0 0 17 22" fill="none"><path d="M4 3L12 11L4 19" stroke="#fff" strokeWidth="6" /></svg>
            </button>
          </div>
        </div>
        <div className="relative ml-[156px] h-[844px] w-[1244px] border-2 border-[#ddd] bg-white">
          <h2 className="flex h-[94px] pl-[20px] pt-[17px] text-[44px] font-extrabold leading-[56px] tracking-[-0.2px]">[ Insert title here ]</h2>
          <UsMap />
          <div className="absolute right-[30px] top-[100px] flex flex-col gap-[2px]">
            <div className="flex h-[46px] w-[46px] items-center justify-center rounded-md bg-black/[0.16]"><svg className="mb-[2px] h-3 w-3" viewBox="0 0 12 12"><path d="M6 0V12M0 6H12" stroke="#fff" strokeWidth="2" /></svg></div>
            <div className="flex h-[46px] w-[46px] items-center justify-center rounded-md bg-black/[0.16]"><svg className="mb-[2px] h-3 w-3" viewBox="0 0 12 12"><path d="M0 6H12" stroke="#fff" strokeWidth="2.400" /></svg></div>
          </div>
        </div>
      </div>
      <div className="flex h-[136px] shrink-0 items-center justify-center whitespace-pre bg-[#444] pb-[2px] text-[32px] text-[#c4c4c4]">
        We have updated our Privacy Policy to reflect the new EU regulations. Please <span className="text-white">give it a read</span> (it is written with the goal of clarity) and <span className="font-bold text-white">click here to accept it</span>.
      </div>
    </div>
  );
}
